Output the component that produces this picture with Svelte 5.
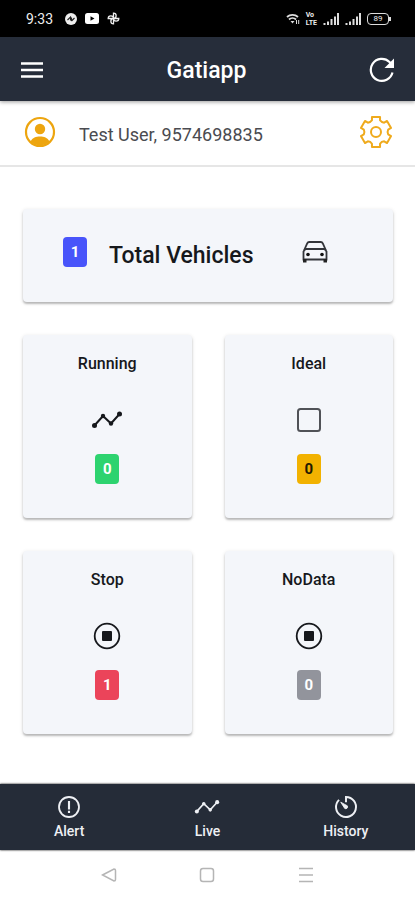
<script lang="ts">
  const cards = [
    {label: 'Running', icon: 'activity', count: 0, color: 'success'},
    {label: 'Ideal', icon: 'square', count: 0, color: 'warning'},
    {label: 'Stop', icon: 'stop', count: 1, color: 'danger'},
    {label: 'NoData', icon: 'stop', count: 0, color: 'medium'}
  ]

  const tabs = [
    {label: 'Alert', icon: 'alert'},
    {label: 'Live', icon: 'activity'},
    {label: 'History', icon: 'timer'}
  ]

  // outline of a six tooth gear around 0,0
  const gearPoint = (radius: number, degrees: number) => {
    const a = ((degrees - 90) * Math.PI) / 180
    return `${(radius * Math.cos(a)).toFixed(2)} ${(radius * Math.sin(a)).toFixed(2)}`
  }
  const gear =
    'M' +
    [0, 60, 120, 180, 240, 300]
      .map(
        (t) =>
          `${gearPoint(12.4, t - 19)} L${gearPoint(15.6, t - 15)} L${gearPoint(15.6, t + 15)} L${gearPoint(12.4, t + 19)} Q${gearPoint(11, t + 30)} ${gearPoint(12.4, t + 41)}`
      )
      .join(' L') +
    'Z'
</script>

{#snippet icon(name: string)}
  {#if name === 'activity'}
    <svg class="icon" viewBox="0 0 32 32" aria-hidden="true">
      <path d="M3 22 12 12l8 7.500 9-10" fill="none" stroke="currentColor" stroke-width="2" />
      <g fill="currentColor">
        <circle cx="3.500" cy="21.500" r="2.500" />
        <circle cx="12" cy="12" r="2.200" />
        <circle cx="20" cy="19.500" r="2.200" />
        <circle cx="28.500" cy="10" r="2.500" />
      </g>
    </svg>
  {:else if name === 'square'}
    <svg class="icon" viewBox="0 0 32 32" aria-hidden="true">
      <rect x="5" y="5" width="22" height="22" rx="2.500" fill="none" stroke="#505257" stroke-width="2" />
    </svg>
  {:else if name === 'stop'}
    <svg class="icon" viewBox="0 0 32 32" aria-hidden="true">
      <circle cx="16" cy="16" r="12.300" fill="none" stroke="currentColor" stroke-width="1.800" />
      <rect x="11" y="11" width="10" height="10" rx="1" fill="currentColor" />
    </svg>
  {:else if name === 'alert'}
    <svg class="icon" viewBox="0 0 32 32" aria-hidden="true">
      <circle cx="16" cy="16" r="12.300" fill="none" stroke="currentColor" stroke-width="2.200" />
      <path d="M16 8.500v10.500M16 20.500v3" fill="none" stroke="currentColor" stroke-width="2.600" />
    </svg>
  {:else if name === 'timer'}
    <svg class="icon" viewBox="0 0 32 32" aria-hidden="true">
      <path d="M16 10V3.700a12.300 12.300 0 1 1-8.600 3.500" fill="none" stroke="currentColor" stroke-width="2.400" />
      <path d="M9.500 10 17.600 14.500a2.300 2.300 0 0 1-3.200 3.200z" fill="currentColor" stroke="currentColor" />
    </svg>
  {/if}
{/snippet}

<div class="app">
  <div class="status">
    <div class="status-left">
      <span class="clock">9:33</span>
      <svg width="12" height="12" viewBox="0 0 12 12" aria-hidden="true">
        <circle cx="6" cy="6" r="6" fill="#eee" />
        <path d="M2.500 7 5.500 4v3.500M6.500 8V4.500M6.500 8l3-3" fill="none" stroke="#222" stroke-width="1.100" />
      </svg>
      <svg width="14" height="11" viewBox="0 0 14 11" aria-hidden="true">
        <rect width="14" height="11" rx="2.500" fill="#fff" />
        <path d="M5.500 3.200v4.600l4-2.300z" fill="#000" />
      </svg>
      <svg width="13" height="13" viewBox="0 0 13 13" aria-hidden="true">
        <g fill="none" stroke="#eee" stroke-width="1.300">
          <path d="M6.500 6.500V1.200a2.600 2.600 0 0 1 0 5.300H11.800a2.600 2.600 0 0 1-5.300 0V11.800a2.600 2.600 0 0 1 0-5.300H1.200a2.600 2.600 0 0 1 5.300 0" />
        </g>
      </svg>
    </div>
    <div class="status-right">
      <svg width="14" height="12" viewBox="0 0 14 12" aria-hidden="true">
        <g fill="none" stroke="#ddd" stroke-width="1.800">
          <path d="M1 4a8 8 0 0 1 11 0M3 6.500a5 5 0 0 1 7 0" />
        </g>
        <path d="M4.500 8h4l-2 2.500z" fill="#ddd" />
        <path d="M10.500 11V7M12.700 7v4" stroke="#ddd" />
      </svg>
      <span class="volte"><span>Vo</span><span>LTE</span></span>
      {#each [0, 1] as sim (sim)}
        <svg width="16" height="12" viewBox="0 0 16 12" aria-hidden="true">
          <path d="M1.500 12v-2M5 12V8.500M8.500 12V6M12 12V3.500M15 12V0" stroke="#ddd" stroke-width="2" />
        </svg>
      {/each}
      <span class="battery">89</span>
    </div>
  </div>

  <header>
    <button class="bar-button" aria-label="Menu">
      <svg width="24" height="24" viewBox="0 0 24 24" aria-hidden="true">
        <path d="M1 5.500h22M1 12h22M1 18.500h22" stroke="#fff" stroke-width="2.600" />
      </svg>
    </button>
    <h1>Gatiapp</h1>
    <button class="bar-button" aria-label="Refresh">
      <svg width="26" height="26" viewBox="0 0 26 26" aria-hidden="true">
        <path d="M23.500 15.500A11 11 0 1 1 20.500 5L23 8" fill="none" stroke="#fff" stroke-width="2.200" />
        <path d="M25 1.500v9.500h-9.500z" fill="#fff" />
      </svg>
    </button>
  </header>

  <section class="user">
    <svg width="32" height="32" viewBox="0 0 32 32" aria-hidden="true">
      <circle cx="16" cy="16" r="14" fill="none" stroke="#eda50f" stroke-width="2.200" />
      <circle cx="16" cy="13" r="5.200" fill="#eda50f" />
      <path d="M6.500 25.500c2-4 5.500-5 9.500-5s7.500 1 9.500 5A13.800 13.800 0 0 1 6.500 25.500z" fill="#eda50f" />
    </svg>
    <span class="user-name">Test User, 9574698835</span>
    <button class="bar-button" aria-label="Settings">
      <svg width="34" height="34" viewBox="-17 -17 34 34" aria-hidden="true">
        <g fill="none" stroke="#efaa1c" stroke-width="2" stroke-linejoin="round">
          <path d={gear} />
          <circle r="5" />
        </g>
      </svg>
    </button>
  </section>

  <main>
    <div class="card total">
      <span class="badge primary">1</span>
      <h2>Total Vehicles</h2>
      <svg width="26" height="24" viewBox="0 0 26 24" aria-hidden="true">
        <g fill="none" stroke="#33353a" stroke-width="1.800">
          <path d="M2 10.500 5.200 3.400Q5.800 2 7.200 2h11.600q1.400 0 2 1.400L24 10.500" />
          <path d="M1.500 19.500V11.500L3.500 9h19l2 2.500v8z" />
        </g>
        <path d="M1 19h3.500v3.500H1zM21.500 19H25v3.500h-3.500z" fill="#222" />
        <circle cx="6" cy="14.500" r="1.800" fill="#111" />
        <circle cx="20" cy="14.500" r="1.800" fill="#111" />
      </svg>
    </div>
    <div class="grid">
      {#each cards as card (card.label)}
        <div class="card tile">
          <h3>{card.label}</h3>
          {@render icon(card.icon)}
          <span class="badge {card.color}">{card.count}</span>
        </div>
      {/each}
    </div>
  </main>

  <nav class="tabs">
    {#each tabs as tab (tab.label)}
      <button class="tab">
        {@render icon(tab.icon)}
        {tab.label}
      </button>
    {/each}
  </nav>

  <div class="system">
    <button aria-label="Back">
      <svg width="16" height="16" viewBox="0 0 16 16" aria-hidden="true">
        <path d="M1.500 8 13 2q1.500 0 1.500 1.500v9Q14.500 14 13 14z" />
      </svg>
    </button>
    <button aria-label="Home">
      <svg width="16" height="16" viewBox="0 0 16 16" aria-hidden="true">
        <rect x="1.500" y="1.500" width="13" height="13" rx="2.500" />
      </svg>
    </button>
    <button aria-label="Recent apps">
      <svg width="16" height="16" viewBox="0 0 16 16" aria-hidden="true">
        <path d="M1 1.500h14M1 8h14M1 14.500h14" />
      </svg>
    </button>
  </div>
</div>

<style>
  :global(body) {
    background: #fff;
  }
  .app {
    min-height: 100vh;
    display: flex;
    flex-direction: column;
    font-family: Roboto, 'Liberation Sans', sans-serif;
    color: #16181c;
  }
  h1,
  h2,
  h3 {
    margin: 0;
    font-weight: 500;
  }
  button {
    padding: 0;
    border: 0;
    background: none;
    color: inherit;
    font: inherit;
    cursor: pointer;
  }
  svg {
    display: block;
    flex: none;
  }
  .status {
    height: 37px;
    box-sizing: border-box;
    padding: 0 24px 0 26px;
    display: flex;
    align-items: center;
    justify-content: space-between;
    background: #000;
    color: #eee;
  }
  .status-left,
  .status-right {
    display: flex;
    align-items: center;
    gap: 8px;
  }
  .status-right {
    gap: 6px;
  }
  .clock {
    margin-right: 4px;
    font-size: 14px;
  }
  .volte {
    display: flex;
    flex-direction: column;
    font-size: 7px;
    font-weight: 700;
    line-height: 8px;
  }
  .battery {
    position: relative;
    width: 20px;
    margin-right: 2px;
    border: 1px solid #ddd;
    border-radius: 4px;
    font-size: 8px;
    line-height: 10px;
    text-align: center;
  }
  .battery::after {
    content: '';
    position: absolute;
    top: 3px;
    right: -3px;
    width: 2px;
    height: 4px;
    background: #ddd;
  }
  header {
    height: 64px;
    box-sizing: border-box;
    padding: 2px 20px 0 20px;
    display: flex;
    align-items: center;
    justify-content: space-between;
    background: #262d3a;
    color: #fff;
    box-shadow: 0 1px 4px rgba(0, 0, 0, 0.4);
    z-index: 1;
  }
  h1 {
    font-size: 23px;
  }
  .bar-button {
    display: flex;
  }
  .user {
    height: 66px;
    box-sizing: border-box;
    padding: 0 22px 2px 24px;
    display: flex;
    align-items: center;
    border-bottom: 2px solid #e6e6e6;
  }
  .user-name {
    flex: 1;
    margin-left: 23px;
    padding-top: 4px;
    font-size: 18px;
    color: #4a4b50;
  }
  main {
    flex: 1;
    padding: 42px 22px 48px 23px;
    display: flex;
    flex-direction: column;
    gap: 33px;
  }
  .card {
    border-radius: 4px;
    background: #f4f6fa;
    box-shadow:
      0 2px 2px rgba(0, 0, 0, 0.22),
      0 1px 4px rgba(0, 0, 0, 0.12);
  }
  .total {
    height: 93px;
    box-sizing: border-box;
    padding: 0 65px 8px 40px;
    display: flex;
    align-items: center;
  }
  .total h2 {
    flex: 1;
    margin-left: 22px;
    padding-top: 8px;
    font-size: 23px;
  }
  .grid {
    display: grid;
    grid-template-columns: repeat(2, 1fr);
    gap: 33px;
  }
  .tile {
    height: 183px;
    box-sizing: border-box;
    padding-top: 19px;
    display: flex;
    flex-direction: column;
    align-items: center;
  }
  .tile h3 {
    font-size: 16px;
    line-height: 20px;
  }
  .icon {
    width: 32px;
    height: 32px;
  }
  .tile .icon {
    margin: 30px 0 18px;
  }
  .badge {
    width: 24px;
    border-radius: 4px;
    font-size: 15px;
    font-weight: 700;
    line-height: 30px;
    text-align: center;
    color: #fff;
  }
  .primary {
    background: #4854fa;
  }
  .success {
    background: #2dd36f;
  }
  .warning {
    background: #f2b200;
    color: #221a00;
  }
  .danger {
    background: #eb445a;
  }
  .medium {
    background: #92949c;
  }
  .tabs {
    height: 66px;
    display: grid;
    grid-template-columns: repeat(3, 1fr);
    background: #252c38;
    color: #eef0f4;
    box-shadow: 0 0 2px #000;
  }
  .tab {
    display: flex;
    flex-direction: column;
    align-items: center;
    justify-content: center;
    gap: 2px;
    font-size: 14px;
    font-weight: 500;
    line-height: 18px;
  }
  .tab .icon {
    width: 26px;
    height: 26px;
  }
  .system {
    height: 50px;
    padding: 0 60px;
    display: grid;
    grid-template-columns: repeat(3, 1fr);
    align-items: center;
    justify-items: center;
  }
  .system svg {
    fill: none;
    stroke: #b5b5b5;
    stroke-width: 1.5px;
  }
</style>
